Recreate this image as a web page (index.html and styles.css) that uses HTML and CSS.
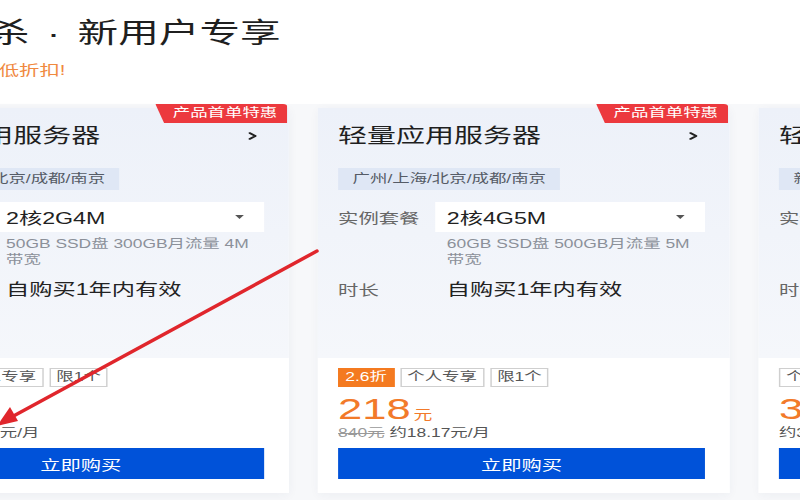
FILE: index.html
```html
<!DOCTYPE html>
<html lang="zh-CN">
<head>
<meta charset="utf-8">
<title>限时秒杀 · 新用户专享</title>
<link rel="stylesheet" href="styles.css">
</head>
<body>
<div class="stage">
  <header class="head">
    <h1 class="title">限时秒杀<span class="dot">·</span>新用户专享</h1>
    <p class="sub">热门云产品超低折扣!</p>
  </header>
  <section class="cards">
    <article class="card">
      <span class="badge">产品首单特惠</span>
      <div class="card-top">
        <div class="card-head">
          <h2>轻量应用服务器</h2>
          <svg class="chev" viewBox="0 0 6 8"><path d="M1 1 L5 4 L1 7" fill="none" stroke="#222" stroke-width="1.6" stroke-linecap="round" stroke-linejoin="round"/></svg>
        </div>
        <span class="region">广州/上海/北京/成都/南京</span>
        <div class="row spec">
          <span class="label">实例套餐</span>
          <div class="select"><span>2核2G4M</span><i class="caret"></i></div>
        </div>
        <p class="desc">50GB SSD盘 300GB月流量 4M 带宽</p>
        <div class="row dur">
          <span class="label">时长</span><span class="value">自购买1年内有效</span>
        </div>
      </div>
      <div class="card-bottom">
        <div class="tags"><span class="tag off">2.5折</span><span class="tag">个人专享</span><span class="tag">限1个</span></div>
        <div class="price"><b>119</b><small>元</small></div>
        <div class="orig"><s>480元</s> 约9.98元/月</div>
        <button class="buy">立即购买</button>
      </div>
    </article>

    <article class="card">
      <span class="badge">产品首单特惠</span>
      <div class="card-top">
        <div class="card-head">
          <h2>轻量应用服务器</h2>
          <svg class="chev" viewBox="0 0 6 8"><path d="M1 1 L5 4 L1 7" fill="none" stroke="#222" stroke-width="1.6" stroke-linecap="round" stroke-linejoin="round"/></svg>
        </div>
        <span class="region">广州/上海/北京/成都/南京</span>
        <div class="row spec">
          <span class="label">实例套餐</span>
          <div class="select"><span>2核4G5M</span><i class="caret"></i></div>
        </div>
        <p class="desc">60GB SSD盘 500GB月流量 5M 带宽</p>
        <div class="row dur">
          <span class="label">时长</span><span class="value">自购买1年内有效</span>
        </div>
      </div>
      <div class="card-bottom">
        <div class="tags"><span class="tag off">2.6折</span><span class="tag">个人专享</span><span class="tag">限1个</span></div>
        <div class="price"><b>218</b><small>元</small></div>
        <div class="orig"><s>840元</s> 约18.17元/月</div>
        <button class="buy">立即购买</button>
      </div>
    </article>

    <article class="card">
      <span class="badge">产品首单特惠</span>
      <div class="card-top">
        <div class="card-head">
          <h2>轻量应用服务器</h2>
          <svg class="chev" viewBox="0 0 6 8"><path d="M1 1 L5 4 L1 7" fill="none" stroke="#222" stroke-width="1.6" stroke-linecap="round" stroke-linejoin="round"/></svg>
        </div>
        <span class="region">新加坡/首尔/东京/硅谷</span>
        <div class="row spec">
          <span class="label">实例套餐</span>
          <div class="select"><span>2核2G30M</span><i class="caret"></i></div>
        </div>
        <p class="desc">50GB SSD盘 1024GB月流量 30M 带宽</p>
        <div class="row dur">
          <span class="label">时长</span><span class="value">自购买1年内有效</span>
        </div>
      </div>
      <div class="card-bottom">
        <div class="tags"><span class="tag">个人专享</span><span class="tag">限1个</span></div>
        <div class="price"><b>399</b><small>元</small></div>
        <div class="orig">约33.25元/月</div>
        <button class="buy">立即购买</button>
      </div>
    </article>
  </section>
</div>
<svg class="arrow" viewBox="0 0 800 500" width="800" height="500">
  <line x1="317" y1="251" x2="8" y2="419" stroke="#e0262c" stroke-width="3.5" stroke-linecap="round"/>
  <polygon points="-3,426 18,421 10,407" fill="#e0262c"/>
</svg>
</body>
</html>
```

FILE: styles.css
```css
* {
  box-sizing: border-box;
  margin: 0;
  padding: 0;
}

html,
body {
  width: 800px;
  height: 500px;
  overflow: hidden;
}

body {
  position: relative;
  background: linear-gradient(180deg, #ffffff 0, #ffffff 104px, #f7f8fa 104px, #f7f8fa 100%);
  font-family: "Liberation Sans", "Noto Sans CJK SC", sans-serif;
  color: #222;
}

/* the source screenshot is horizontally stretched */
.stage {
  width: 900px;
  transform: translateX(-123px) scaleX(1.45);
  transform-origin: 0 0;
}

.head {
  height: 108px;
  padding-top: 14px;
}

.title {
  font-size: 28px;
  line-height: 40px;
  font-weight: 400;
  color: #1f1f1f;
  white-space: nowrap;
  text-indent: -7px;
}

.dot {
  margin: 0 12px;
}

.sub {
  margin-top: 6px;
  font-size: 14px;
  line-height: 20px;
  color: #f0893f;
  white-space: nowrap;
}

.cards {
  display: flex;
  gap: 20px;
  align-items: flex-start;
}

.card {
  position: relative;
  flex: 0 0 284px;
  background: #fff;
  box-shadow: 0 2px 8px rgba(30, 50, 90, 0.05);
}

.badge {
  position: absolute;
  top: -4px;
  right: 1px;
  height: 19px;
  padding: 0 7px 0 12px;
  background: #ec393e;
  color: #fff;
  font-size: 12px;
  line-height: 19px;
  white-space: nowrap;
  clip-path: polygon(0 0, 100% 0, 100% 100%, 6px 100%);
  border-radius: 0 3px 0 0;
}

.card-top {
  padding: 14px 17px 57px 14px;
  background: linear-gradient(180deg, #edf1f9 0%, #f5f7fb 100%);
}

.card-head {
  display: flex;
  align-items: center;
  justify-content: space-between;
}

.card-head h2 {
  font-size: 20px;
  line-height: 28px;
  font-weight: 400;
  color: #1f1f1f;
  white-space: nowrap;
}

.chev {
  width: 6px;
  height: 8px;
  margin-right: 5px;
}

.region {
  display: block;
  width: max-content;
  margin-top: 18px;
  height: 22px;
  padding: 0 10px;
  background: #dfe7f5;
  color: #555b66;
  font-size: 12px;
  line-height: 22px;
  white-space: nowrap;
}

.row {
  display: flex;
  align-items: center;
}

.spec {
  margin-top: 12px;
}

.label {
  flex: none;
  width: 67px;
  font-size: 14px;
  color: #666;
  white-space: nowrap;
}

.select {
  flex: 1;
  height: 30px;
  display: flex;
  align-items: center;
  justify-content: space-between;
  padding: 0 14px 0 8px;
  background: #fff;
  font-size: 16px;
  color: #222;
}

.caret {
  width: 0;
  height: 0;
  border-left: 3.5px solid transparent;
  border-right: 3.5px solid transparent;
  border-top: 4px solid #555;
}

.desc {
  margin: 4px 0 0 75px;
  font-size: 12px;
  line-height: 16px;
  color: #8b9099;
}

.dur {
  margin-top: 11px;
  line-height: 22px;
}

.value {
  padding-left: 8px;
  font-size: 16px;
  color: #222;
  white-space: nowrap;
}

.card-bottom {
  padding: 10px 17px 14px 14px;
  background: #fff;
}

.tags {
  display: flex;
  gap: 4px;
}

.tag {
  height: 19px;
  padding: 0 4px;
  border: 1px solid #cfcfcf;
  font-size: 12px;
  line-height: 17px;
  color: #555;
  white-space: nowrap;
}

.tag.off {
  background: #f47a20;
  border-color: #f47a20;
  color: #fff;
}

.price {
  margin-top: 7px;
  height: 30px;
  font-family: "Liberation Sans", "Noto Sans CJK SC", sans-serif;
  font-size: 30px;
  line-height: 30px;
  color: #f27a2a;
  white-space: nowrap;
}

.price b {
  font-weight: 400;
}

.price small {
  margin-left: 2px;
  font-size: 13px;
  line-height: 1;
}

.orig {
  margin-top: 1px;
  font-size: 12px;
  line-height: 16px;
  color: #555;
  white-space: nowrap;
}

.orig s {
  color: #999;
}

.buy {
  display: block;
  width: 100%;
  height: 31px;
  margin-top: 7px;
  border: 0;
  background: #0052d9;
  color: #fff;
  font-family: inherit;
  font-size: 14px;
}

.arrow {
  position: absolute;
  top: 0;
  left: 0;
  pointer-events: none;
  overflow: visible;
}
```
